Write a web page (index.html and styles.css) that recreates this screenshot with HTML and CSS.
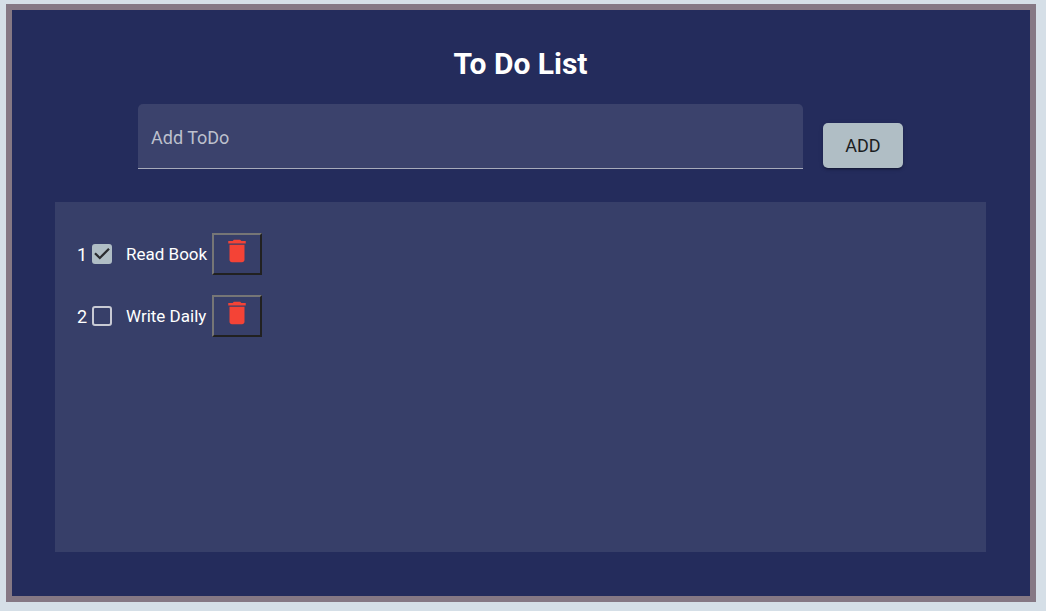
FILE: index.html
```html
<!DOCTYPE html>
<html lang="en">
<head>
<meta charset="utf-8">
<title>To Do List</title>
<link rel="stylesheet" href="styles.css">
</head>
<body>
<main class="app">
  <h1 class="title">To Do List</h1>
  <form class="entry">
    <input class="field" type="text" aria-label="Add ToDo" placeholder="Add ToDo">
    <button class="add" type="button">ADD</button>
  </form>
  <ul class="list">
    <li class="item">
      <span class="number">1</span>
      <input class="check" type="checkbox" id="todo-1" checked>
      <label class="label" for="todo-1">Read Book</label>
      <button class="delete" type="button" aria-label="Delete Read Book"><svg class="icon" viewBox="0 0 24 24"><path d="M6 19c0 1.100.9 2 2 2h8c1.100 0 2-.9 2-2V7H6v12zM19 4h-3.500l-1-1h-5l-1 1H5v2h14V4z"/></svg></button>
    </li>
    <li class="item">
      <span class="number">2</span>
      <input class="check" type="checkbox" id="todo-2">
      <label class="label" for="todo-2">Write Daily</label>
      <button class="delete" type="button" aria-label="Delete Write Daily"><svg class="icon" viewBox="0 0 24 24"><path d="M6 19c0 1.100.9 2 2 2h8c1.100 0 2-.9 2-2V7H6v12zM19 4h-3.500l-1-1h-5l-1 1H5v2h14V4z"/></svg></button>
    </li>
  </ul>
</main>
</body>
</html>
```
FILE: styles.css
```css
* {
  box-sizing: border-box;
}

body {
  margin: 0;
  min-height: 100vh;
  padding: 4px 10px 9px 6px;
  display: flex;
  background: #d5dfe7;
  color: #fff;
  font-family: Roboto, sans-serif;
  font-size: 18px;
}

.app {
  flex: 1;
  display: flex;
  flex-direction: column;
  padding: 36px 44px 44px 43px;
  border: 6px solid #857884;
  background: #242c5c;
}

.title {
  margin: 0 0 22px;
  font-size: 30px;
  line-height: 36px;
  text-align: center;
}

.entry {
  display: flex;
  align-items: flex-end;
  gap: 20px;
  margin: 0 83px 33px;
}

.field {
  flex: 1;
  min-width: 0;
  height: 65px;
  padding: 2px 13px 0;
  border: 0;
  border-bottom: 1px solid #a7aaba;
  border-radius: 5px 5px 0 0;
  background: #3b426c;
  color: #fff;
  font: inherit;
}

.field::placeholder {
  color: #bdc0cd;
  opacity: 1;
}

.add {
  width: 80px;
  height: 45px;
  margin-bottom: 1px;
  border: 0;
  border-radius: 5px;
  background: #b0bec5;
  box-shadow: 0 3px 1px -2px rgba(0, 0, 0, 0.2), 0 2px 2px rgba(0, 0, 0, 0.14), 0 1px 5px rgba(0, 0, 0, 0.12);
  color: #1b1d1f;
  font: 400 18px Roboto, sans-serif;
}

.list {
  flex: 1;
  margin: 0;
  padding: 31px 22px;
  background: #373f69;
  list-style: none;
}

.item {
  display: flex;
  align-items: center;
  margin-bottom: 20px;
}

.number {
  width: 15px;
}

.check {
  appearance: none;
  flex: none;
  width: 20px;
  height: 20px;
  margin: 0 14px 0 0;
  border: 2px solid #c8cad4;
  border-radius: 3px;
}

.check:checked {
  border: 0;
  background: #b0bec5;
}

.check:checked::before {
  content: "";
  display: block;
  height: 20px;
  background: #2b2d30;
  clip-path: polygon(39% 78%, 11% 50%, 19% 42%, 39% 62%, 81% 20%, 89% 28%);
}

.label {
  width: 86px;
  padding-bottom: 1px;
  font-size: 17px;
  white-space: nowrap;
}

.delete {
  width: 50px;
  height: 42px;
  padding: 0;
  border: 2px outset #767676;
  background: transparent;
}

.icon {
  display: block;
  width: 30px;
  height: 30px;
  margin: 0 auto 6px;
  fill: #f44336;
}
```
